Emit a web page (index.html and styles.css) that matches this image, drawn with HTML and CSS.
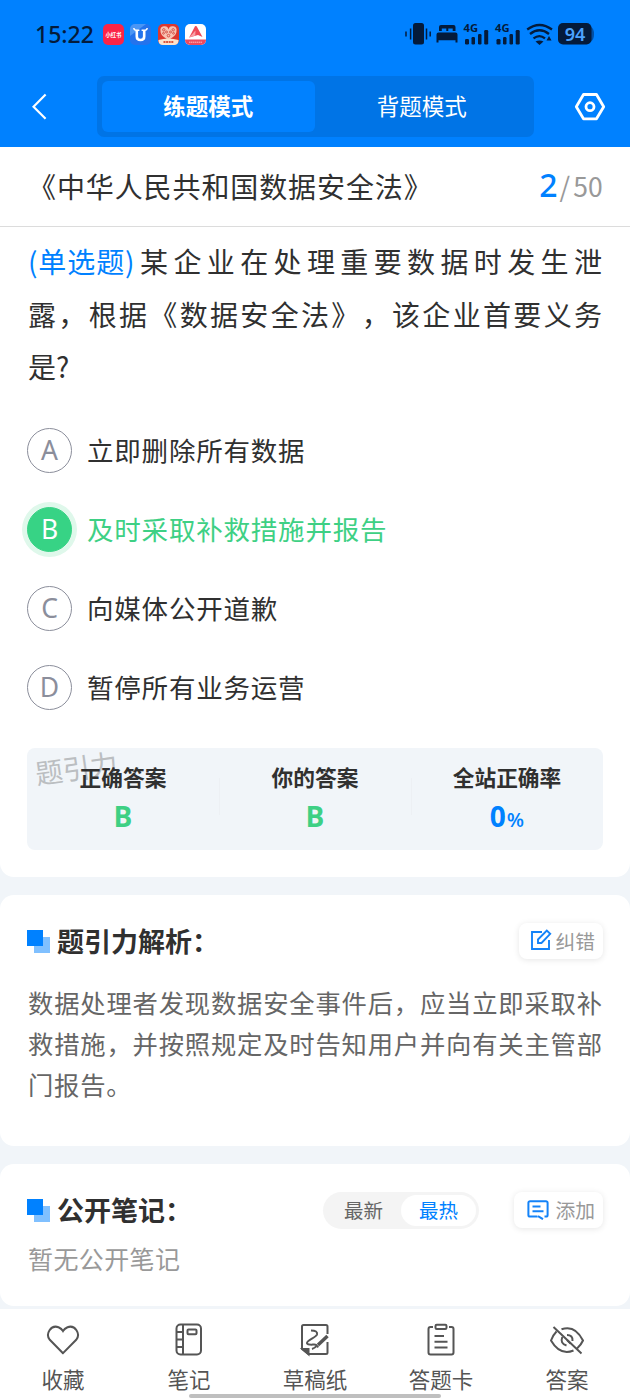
FILE: index.html
```
<!DOCTYPE html>
<html lang="zh-CN">
<head>
<meta charset="utf-8">
<title>练题模式</title>
<link rel="stylesheet" href="styles.css">
</head>
<body>
<div class="app">
  <header class="top">
    <div class="status">
      <span class="clock">15:22</span>
      <div class="apps">
        <svg width="21" height="21" viewBox="0 0 21 21"><rect width="21" height="21" rx="5" fill="#fb2447"/><text class="mini" x="10.500" y="12.600" font-size="5.400" textLength="16" fill="#fff">小红书</text></svg>
        <svg width="21" height="21" viewBox="0 0 21 21"><rect width="21" height="21" rx="5" fill="#2473ec"/><path d="M0 12V5a5 5 0 0 1 5-5h11z" fill="#4b96f4"/><path d="M6.800 6v6.500q0 3.500 3.700 3.500t3.700-3.500V6" fill="none" stroke="#fff" stroke-width="2.600"/><path d="M3.800 4q.2 2.300 2.600 2.300h3M17.200 4q-.2 2.300-2.600 2.300h-3" fill="none" stroke="#fff" stroke-width="1.500"/></svg>
        <svg width="21" height="21" viewBox="0 0 21 21"><rect width="21" height="21" rx="5" fill="#dc3830"/><path d="M10.500 16C6 13.500 2.500 11 2.500 7A3.900 3.900 0 0 1 10.500 5.500 3.900 3.900 0 0 1 18.500 7c0 4-3.500 6.500-8 9z" fill="#f7c3b3"/><g fill="none" stroke="#cf3c34" stroke-width=".8"><circle cx="5.800" cy="5.800" r="1.200"/><circle cx="8.500" cy="8" r="1"/><circle cx="12.500" cy="8" r="1"/><circle cx="15.200" cy="5.800" r="1.200"/><circle cx="5.500" cy="9.300" r=".9"/><circle cx="15.500" cy="9.300" r=".9"/><circle cx="10.500" cy="11.600" r="1.300"/></g><path d="M.5 16q10-3 20 0v1a4.500 4.500 0 0 1-4.500 4H5a4.500 4.500 0 0 1-4.500-4z" fill="#fbe3cc"/><path d="M5.500 18h10" stroke="#d8553f" stroke-width="2" stroke-dasharray="2 .6"/></svg>
        <svg width="21" height="21" viewBox="0 0 21 21"><rect width="21" height="21" rx="5" fill="#fff"/><path d="M0 15.500h21v.5a5 5 0 0 1-5 5H5a5 5 0 0 1-5-5z" fill="#ee4a5e"/><path d="M10 2.200q1.500-.7 2.200 1L17.500 13l-4.500-2-8.800 2.600z" fill="#ee4a58"/><path d="M10.500 6.500 4.200 13.600l6-2z" fill="#f8a0a5"/><path d="M4 18.200h13" stroke="#fbb" stroke-width="1" stroke-dasharray="1.500 .5"/></svg>
      </div>
      <div class="signals">
        <svg width="190" height="37" viewBox="404 16 190 37" fill="#041b3b">
          <rect x="413" y="23" width="11" height="21.500" rx="2.500"/>
          <path d="M410.600 28.500v11M406 31.500v5M426.500 28.500v11M430.200 31.500v5" stroke="#041b3b" stroke-width="1.500" fill="none"/>
          <path d="M439 31v-4a2 2 0 0 1 2-2h12.500a2 2 0 0 1 2 2v4h-2.800v-2.500h-4.400V31h-2v-2.500h-4.500V31zM436.500 42.500V34.500a2 2 0 0 1 2-2h17a2 2 0 0 1 2 2v8h-2v-2.200h-17v2.200z"/>
          <text class="net" x="463.500" y="32">4G</text><text class="net" x="495" y="32">4G</text>
          <g id="bars"><rect x="465" y="39" width="4" height="5.500" rx="1.200"/><rect x="471.500" y="37" width="3.500" height="7.500" rx="1.200"/><rect x="478" y="34" width="3.500" height="10.500" rx="1.200"/><rect x="484.200" y="30" width="4" height="14.500" rx="1.200"/></g>
          <use href="#bars" x="31.500"/>
          <g fill="none" stroke="#041b3b" stroke-width="2.300"><path d="M527.200 29.500q12.300-9 24.800 0M530 34q9.500-7.500 19 0M533.500 38.400q6-4.500 11.500 0"/></g>
          <path d="M535.500 41.500q4-2 8 0l-4 3.500zM546.500 40.500l2.500-4.500 2.500 4.500z"/>
          <path d="M591 27q3 1.500 3 7t-3 7.500z" fill="#024fa4"/>
          <rect x="558" y="23" width="33.500" height="21.500" rx="5"/>
          <text class="battery" x="575" y="40.600">94</text>
        </svg>
      </div>
    </div>
    <nav class="nav">
      <svg class="back" width="16" height="28" viewBox="0 0 16 28" fill="none" stroke="#fff" stroke-width="2.200"><path d="M13.600 1.500 1.500 13.700l12.100 12"/></svg>
      <div class="modes"><span class="mode mode-on">练题模式</span><span class="mode">背题模式</span></div>
      <svg class="gear" width="32" height="28" viewBox="0 0 32 28" fill="none" stroke="#fff" stroke-width="2.800" stroke-linejoin="round"><path d="M9.500 1.500h13L29.700 13.700l-7.200 12.100h-13L2.300 13.700z"/><circle cx="16" cy="13.700" r="4"/></svg>
    </nav>
  </header>

  <main class="content">
    <section class="card card-first">
      <div class="title"><h1>《中华人民共和国数据安全法》</h1><p class="count"><b>2</b><i>/</i><span>50</span></p></div>
      <div class="question">
        <p class="line"><span class="kind">(单选题)</span><span class="fill">某企业在处理重要数据时发生泄</span></p>
        <p class="fill">露，根据《数据安全法》，该企业首要义务</p>
        <p>是?</p>
      </div>
      <ul class="options">
        <li><span class="mark">A</span><span class="choice">立即删除所有数据</span></li>
        <li class="right"><span class="mark">B</span><span class="choice">及时采取补救措施并报告</span></li>
        <li><span class="mark">C</span><span class="choice">向媒体公开道歉</span></li>
        <li><span class="mark">D</span><span class="choice">暂停所有业务运营</span></li>
      </ul>
      <div class="result">
        <span class="watermark">题引力</span>
        <div><h3>正确答案</h3><strong>B</strong></div>
        <div><h3>你的答案</h3><strong>B</strong></div>
        <div><h3>全站正确率</h3><strong class="rate">0<small>%</small></strong></div>
      </div>
    </section>

    <section class="card card-analysis">
      <div class="head">
        <span class="squares"></span><h2>题引力解析：</h2>
        <span class="chip fix"><svg width="22" height="22" viewBox="0 0 22 22" fill="none" stroke="#1483f8" stroke-width="1.900"><path d="M12 3H2v17h17v-9"/><path d="M8 14v-3.500L16.800 1.600l3.400 3.200L11.500 14z"/></svg><span class="chip-text">纠错</span></span>
      </div>
      <div class="analysis">
        <p class="fill">数据处理者发现数据安全事件后，应当立即采取补</p>
        <p class="fill">救措施，并按照规定及时告知用户并向有关主管部</p>
        <p>门报告。</p>
      </div>
    </section>

    <section class="card card-notes">
      <div class="head">
        <span class="squares"></span><h2>公开笔记：</h2>
        <div class="sort"><span>最新</span><span class="sort-on">最热</span></div>
        <span class="chip add"><svg width="22" height="20" viewBox="0 0 22 20" fill="none" stroke="#1483f8" stroke-width="2"><path d="M10.500 16.500H3a1.600 1.600 0 0 1-1.600-1.600V2.800A1.600 1.600 0 0 1 3 1.200h16a1.600 1.600 0 0 1 1.600 1.600v12.100A1.600 1.600 0 0 1 19 16.500h-1.500M11 16.200l5 3M5.500 6.500h8M5.500 11.200h11"/></svg><span class="chip-text">添加</span></span>
      </div>
      <p class="empty">暂无公开笔记</p>
    </section>
  </main>

  <footer class="tabs">
    <a><svg width="34" height="34" viewBox="0 0 34 34"><path d="M17 30.200 3.800 16.800C-1 11 5 1.500 12.500 4.200Q15.500 5.400 17 8q1.500-2.600 4.500-3.800C29 1.500 35 11 30.200 16.800z"/></svg>收藏</a>
    <a><svg width="34" height="34" viewBox="0 0 34 34"><rect x="4.500" y="1.500" width="24.500" height="30" rx="4"/><path d="M11 1.500v30M4.500 9H11M4.500 16.500H11M4.500 24H11"/><rect x="15.500" y="6.500" width="9" height="4.800" rx="1"/></svg>笔记</a>
    <a><svg width="34" height="34" viewBox="0 0 34 34"><path d="M29.500 11V3.500q0-1.500-1.500-1.500H5.500Q4 2 4 3.500v22.500l6.500 5H28q1.500 0 1.500-1.500V19"/><path d="M4.500 26h6v5.200z" fill="#555"/><path d="M13 7.500q7 0 6 4c-1 3-11 6-10 8.800s10 0 9.500 2.200q-1 2.500-4.500 3.500"/><path d="m20 22 9.500-9" stroke-width="3.500"/><path d="m18.500 24 2-1"/></svg>草稿纸</a>
    <a><svg width="34" height="34" viewBox="0 0 34 34"><path d="M9 4H6.500Q4.500 4 4.500 6v23.500q0 2 2 2h21q2 0 2-2V6q0-2-2-2H25"/><rect x="11.500" y="1.700" width="11" height="4.300" rx="1.200"/><path d="M10.500 13h9.500M10.500 18.800h13M10.500 24.500h13"/></svg>答题卡</a>
    <a><svg width="34" height="34" viewBox="0 0 34 34"><path d="M6.500 8.500Q3 12 1 17.500 10 33 23.500 27.500M11.500 6.300Q25 1.500 33 17.500q-2 4.500-6 8M3.500 4l28 26.500"/><path d="M12.300 14q-2.500 6.500 4.200 8.500M17 12q6 0 5.500 6M17 17l3.500 3.500"/></svg>答案</a>
    <span class="home-bar"></span>
  </footer>
</div>
</body>
</html>
```
FILE: styles.css
```
* { box-sizing: border-box; }
body, h1, h2, h3, p, ul { margin: 0; padding: 0; }
ul { list-style: none; }
svg { display: block; flex: none; }

body {
  font-family: "Noto Sans CJK SC", sans-serif;
  color: #303030;
  background: #f1f5f9;
  text-spacing-trim: space-all;
}
.app { width: 630px; height: 1400px; display: flex; flex-direction: column; overflow: hidden; }

/* Status bar and mode switch */
.top { height: 147px; background: #0081ff; color: #fff; flex: none; }
.status { height: 68px; padding: 0 36px 0 35px; display: flex; align-items: center; color: #041b3b; }
.clock { width: 68px; font: 500 23px/30px "Noto Sans", sans-serif; }
.apps { display: flex; gap: 6.300px; }
.signals { margin-left: auto; }
.mini { text-anchor: middle; font-weight: 700; }
.net { font: 700 11.200px "Noto Sans", sans-serif; }
.battery { font: 600 18px "Noto Sans", sans-serif; text-anchor: middle; fill: #4ba3ff; }
.nav { height: 79px; padding: 8px 24px 10px 32px; display: flex; align-items: center; }
.modes { width: 437px; height: 61px; margin-left: 48.500px; padding: 5px; display: flex; background: #0074e6; border-radius: 7px; }
.mode { flex: 1; display: flex; align-items: center; justify-content: center; padding-bottom: 3px; font-size: 22.500px; border-radius: 6px; }
.mode-on { background: #0081ff; font-weight: 700; }
.gear { margin-left: auto; }

/* Cards */
.content { flex: 1; display: flex; flex-direction: column; gap: 18px; }
.card { background: #fff; border-radius: 14px; padding: 0 28px; flex: none; }
.card-first { height: 730px; border-radius: 0 0 14px 14px; }
.title { height: 80px; margin: 0 -28px; padding: 0 27px 1px 28px; border-bottom: 1px solid #dcdcdc; display: flex; align-items: center; justify-content: space-between; }
.title h1 { font-size: 28px; font-weight: 400; letter-spacing: .9px; line-height: 40px; }
.count { display: flex; align-items: baseline; line-height: 40px; color: #999; padding-bottom: 1px; }
.count b { font: 500 32px/40px "Noto Sans", sans-serif; color: #0081ff; letter-spacing: -1px; }
.count i { font-style: normal; font-size: 27px; margin: 0 3px; }
.count span { font-size: 26.500px; letter-spacing: .2px; }

.question { padding-top: 8px; font-size: 28px; line-height: 52.500px; }
.question p { height: 52.500px; white-space: nowrap; }
.line { display: flex; }
.kind { color: #0081ff; width: 112px; letter-spacing: .9px; }
.fill { flex: 1; text-align: justify; text-align-last: justify; }

.options { padding-top: 18px; margin-left: -1px; }
.options li { height: 79px; display: flex; align-items: center; gap: 15px; font-size: 26.500px; letter-spacing: .8px; white-space: nowrap; }
.choice { padding-bottom: 2px; }
.mark { width: 45px; height: 45px; border: 1.500px solid #8b8e9b; border-radius: 50%; display: flex; align-items: center; justify-content: center; color: #8b8e9b; font: 400 26.500px/1 "Noto Sans", sans-serif; letter-spacing: 0; }
.right { color: #3ed084; }
.right .mark { color: #fff; background: #37d385; border-color: #37d385; box-shadow: 0 0 0 5px #dff8eb; }

.result { position: relative; height: 102px; margin: 21px -1px 0; border-radius: 8px; background: #f1f5f9; display: flex; text-align: center; }
.result div { flex: 1; padding-top: 13px; }
.result div + div { background: linear-gradient(#edf0f4, #edf0f4) 0 30px / 1px 37px no-repeat; }
.result h3 { position: relative; font-size: 21.700px; line-height: 32px; font-weight: 700; }
.result strong { display: block; font: 700 28px/46px "Open Sans", "Noto Sans", sans-serif; color: #3ed084; }
.result .rate { color: #0081ff; }
.rate small { font-size: 20px; font-weight: 600; margin-left: 1px; }
.watermark { position: absolute; left: 8px; top: 0; font-size: 27.500px; line-height: 38px; color: #bbbec1; transform: rotate(-8deg); }

.card-analysis { height: 251px; padding-top: 26px; }
.card-notes { height: 142px; padding-top: 26px; }
.head { height: 40px; display: flex; align-items: center; margin-right: -1px; }
.head h2 { font-size: 27px; line-height: 40px; font-weight: 700; margin-left: 7px; }
.squares { width: 23px; height: 23px; background: linear-gradient(#0081ff, #0081ff) 0 0 / 16px 16px no-repeat, linear-gradient(#80c0ff, #80c0ff) 7px 7px / 16px 16px no-repeat; margin-left: -1px; }
.chip { height: 36px; margin-left: auto; padding: 0 8px 0 11px; border-radius: 8px; display: flex; align-items: center; justify-content: space-between; font-size: 19.800px; color: #999; box-shadow: 0 1px 6px rgba(0, 0, 0, .1); }
.chip-text { padding-bottom: 2px; }
.fix { width: 84px; }
.fix svg { margin-top: -3px; }
.add { width: 89px; padding-left: 13px; }
.analysis { padding-top: 20.500px; font-size: 25.300px; line-height: 41px; color: #666; }
.analysis p:last-child { letter-spacing: .8px; }
.sort { width: 156px; height: 37px; margin-left: auto; padding: 3px; border-radius: 19px; background: #f4f4f4; display: flex; font-size: 19.500px; line-height: 30px; color: #666; }
.sort span { flex: 1; text-align: center; }
.sort .sort-on { background: #fff; color: #0081ff; border-radius: 16px; }
.sort + .chip { margin-left: 35px; }
.empty { padding-top: 8px; font-size: 25px; line-height: 40px; color: #999; letter-spacing: .4px; }

/* Bottom tab bar */
.tabs { position: relative; height: 91px; flex: none; display: flex; background: #fff; padding-top: 14px; }
.tabs a { flex: 1; display: flex; flex-direction: column; align-items: center; gap: 6px; font-size: 21.500px; line-height: 32px; color: #555; }
.tabs svg { fill: none; stroke: #555; stroke-width: 2; }
.home-bar { position: absolute; left: 189px; bottom: 2px; width: 252px; height: 4px; border-radius: 2px; background: #bfbfbf; }
```
